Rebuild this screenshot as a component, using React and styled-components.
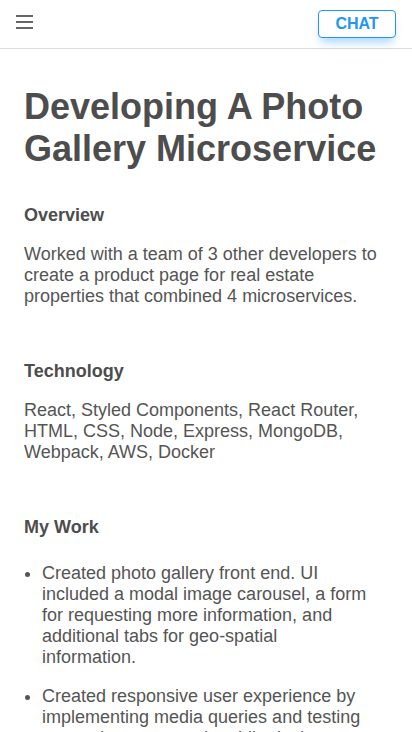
import React from "react";
import styled, { createGlobalStyle } from "styled-components";

const GlobalStyle = createGlobalStyle`
  body {
    margin: 0;
    background: #ffffff;
    font-family: "Liberation Sans", Arial, sans-serif;
    color: #555555;
  }
  * {
    box-sizing: border-box;
  }
`;

const TopBar = styled.header`
  height: 49px;
  display: flex;
  align-items: center;
  justify-content: space-between;
  padding: 0 16px;
  border-bottom: 1px solid #dcdcdc;
`;

const Burger = styled.button`
  width: 17px;
  height: 14px;
  padding: 0;
  border: 0;
  background: none;
  display: flex;
  flex-direction: column;
  justify-content: space-between;
  margin-bottom: 5px;
`;

const BurgerLine = styled.span`
  display: block;
  height: 2px;
  width: 100%;
  background: #666666;
`;

const ChatButton = styled.button`
  width: 78px;
  height: 28px;
  margin-bottom: 1px;
  border: 1px solid #2196f3;
  border-radius: 4px;
  background: #ffffff;
  color: #2196f3;
  font-family: "Liberation Sans", Arial, sans-serif;
  font-size: 16px;
  font-weight: 700;
  box-shadow: 0 7px 10px -3px rgba(33, 150, 243, 0.4);
`;

const Main = styled.main`
  padding: 37px 24px 0;
`;

const Title = styled.h1`
  margin: 0 0 35px;
  font-size: 36px;
  line-height: 42px;
  font-weight: 700;
  color: #4d4d4d;
`;

const Section = styled.section`
  margin-bottom: 54px;
`;

const Heading = styled.h3`
  margin: 0 0 ${(p) => p.$gap || 18}px;
  font-size: 18px;
  line-height: 21px;
  font-weight: 700;
  color: #4d4d4d;
`;

const Text = styled.p`
  margin: 0;
  font-size: 18px;
  line-height: 21px;
`;

const List = styled.ul`
  margin: 0;
  padding: 0 18px 0 18px;
`;

const Item = styled.li`
  font-size: 18px;
  line-height: 21px;
  margin-bottom: 18px;
`;

const App = () => {
  return (
    <>
      <GlobalStyle />
      <TopBar>
        <Burger aria-label="menu">
          <BurgerLine />
          <BurgerLine />
          <BurgerLine />
        </Burger>
        <ChatButton>CHAT</ChatButton>
      </TopBar>
      <Main>
        <Title>Developing A Photo Gallery Microservice</Title>

        <Section>
          <Heading>Overview</Heading>
          <Text>
            Worked with a team of 3 other developers to create a product page
            for real estate properties that combined 4 microservices.
          </Text>
        </Section>

        <Section>
          <Heading>Technology</Heading>
          <Text>
            React, Styled Components, React Router, HTML, CSS, Node, Express,
            MongoDB, Webpack, AWS, Docker
          </Text>
        </Section>

        <Section>
          <Heading $gap={25}>My Work</Heading>
          <List>
            <Item>
              Created photo gallery front end. UI included a modal image
              carousel, a form for requesting more information, and additional
              tabs for geo-spatial information.
            </Item>
            <Item>
              Created responsive user experience by implementing media queries
              and testing across browsers and mobile devices.
            </Item>
          </List>
        </Section>
      </Main>
    </>
  );
};

export default App;
